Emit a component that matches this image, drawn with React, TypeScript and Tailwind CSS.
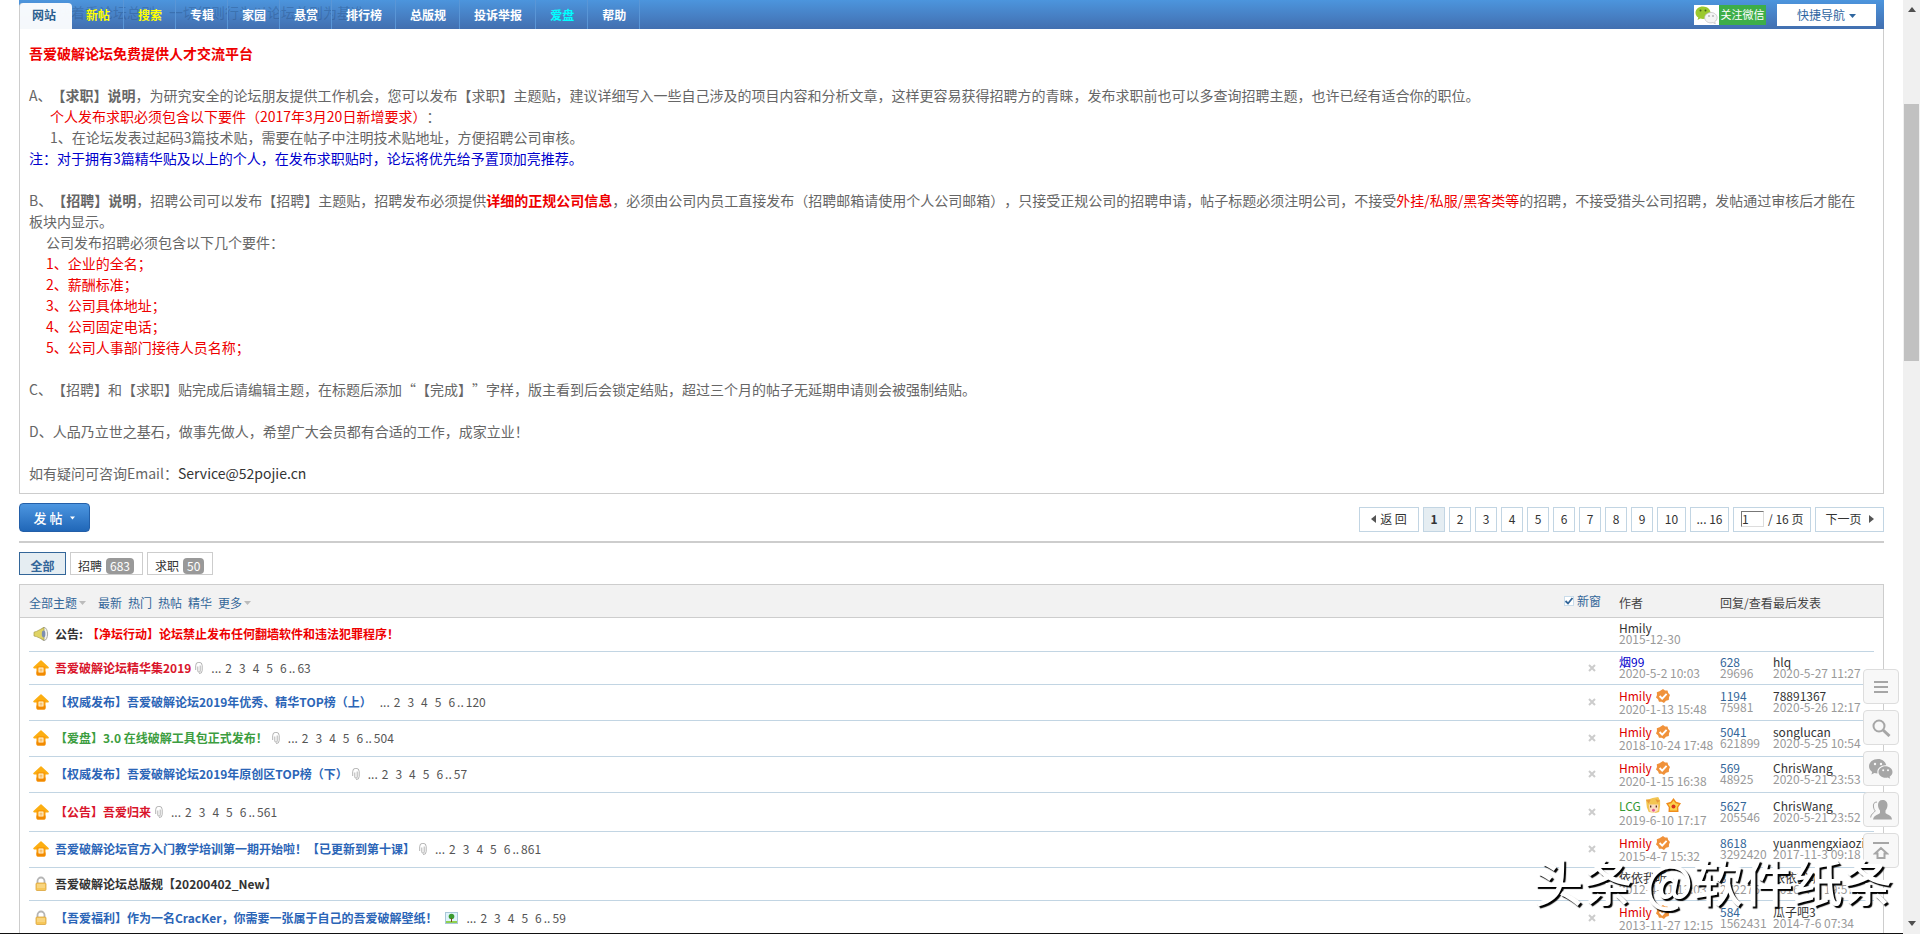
import type { ReactNode } from 'react';

interface NavItem {
  label: string;
  color: string;
}

interface Thread {
  icon: 'notice' | 'pin' | 'lock';
  title: string;
  prefix?: string;
  color: string;
  attach?: 'clip' | 'image';
  lastPage?: string;
  closable: boolean;
  author: string;
  authorColor: string;
  badge?: 'verified' | 'lcg';
  date: string;
  replies?: string;
  views?: string;
  lastUser?: string;
  lastDate?: string;
  height: string;
}

const navItems: NavItem[] = [
  { label: '新帖', color: 'text-[#ffff00]' },
  { label: '搜索', color: 'text-[#ffff00]' },
  { label: '专辑', color: 'text-white' },
  { label: '家园', color: 'text-white' },
  { label: '悬赏', color: 'text-white' },
  { label: '排行榜', color: 'text-white' },
  { label: '总版规', color: 'text-white' },
  { label: '投诉举报', color: 'text-white' },
  { label: '爱盘', color: 'text-[#00ffff]' },
  { label: '帮助', color: 'text-white' },
];

const threads: Thread[] = [
  { icon: 'notice', prefix: '公告:', title: '【净坛行动】论坛禁止发布任何翻墙软件和违法犯罪程序！', color: 'text-[#ee0000]', closable: false, author: 'Hmily', authorColor: 'text-[#333]', date: '2015-12-30', height: 'h-[33px]' },
  { icon: 'pin', title: '吾爱破解论坛精华集2019', color: 'text-[#d9152b]', attach: 'clip', lastPage: '63', closable: true, author: '烟99', authorColor: 'text-[#0000cc]', date: '2020-5-2 10:03', replies: '628', views: '29696', lastUser: 'hlq', lastDate: '2020-5-27 11:27', height: 'h-[33px]' },
  { icon: 'pin', title: '【权威发布】吾爱破解论坛2019年优秀、精华TOP榜（上）', color: 'text-[#2b65b7]', lastPage: '120', closable: true, author: 'Hmily', authorColor: 'text-[#dd0000]', badge: 'verified', date: '2020-1-13 15:48', replies: '1194', views: '75981', lastUser: '78891367', lastDate: '2020-5-26 12:17', height: 'h-9' },
  { icon: 'pin', title: '【爱盘】3.0 在线破解工具包正式发布！', color: 'text-[#3c9d40]', attach: 'clip', lastPage: '504', closable: true, author: 'Hmily', authorColor: 'text-[#dd0000]', badge: 'verified', date: '2018-10-24 17:48', replies: '5041', views: '621899', lastUser: 'songlucan', lastDate: '2020-5-25 10:54', height: 'h-9' },
  { icon: 'pin', title: '【权威发布】吾爱破解论坛2019年原创区TOP榜（下）', color: 'text-[#2b65b7]', attach: 'clip', lastPage: '57', closable: true, author: 'Hmily', authorColor: 'text-[#dd0000]', badge: 'verified', date: '2020-1-15 16:38', replies: '569', views: '48925', lastUser: 'ChrisWang', lastDate: '2020-5-21 23:53', height: 'h-9' },
  { icon: 'pin', title: '【公告】吾爱归来', color: 'text-[#d9152b]', attach: 'clip', lastPage: '561', closable: true, author: 'LCG', authorColor: 'text-[#339933]', badge: 'lcg', date: '2019-6-10 17:17', replies: '5627', views: '205546', lastUser: 'ChrisWang', lastDate: '2020-5-21 23:52', height: 'h-[39px]' },
  { icon: 'pin', title: '吾爱破解论坛官方入门教学培训第一期开始啦！【已更新到第十课】', color: 'text-[#2b65b7]', attach: 'clip', lastPage: '861', closable: true, author: 'Hmily', authorColor: 'text-[#dd0000]', badge: 'verified', date: '2015-4-7 15:32', replies: '8618', views: '3292420', lastUser: 'yuanmengxiaozi', lastDate: '2017-11-3 09:18', height: 'h-9' },
  { icon: 'lock', title: '吾爱破解论坛总版规【20200402_New】', color: 'text-[#333]', closable: false, author: '依依我听', authorColor: 'text-[#333]', date: '2012-4-11 13:03', replies: '3', views: '272276', lastUser: '依依我听', lastDate: '2016-4-1 19:57', height: 'h-[33px]' },
  { icon: 'lock', title: '【吾爱福利】作为一名CracKer，你需要一张属于自己的吾爱破解壁纸！', color: 'text-[#2b65b7]', attach: 'image', lastPage: '59', closable: true, author: 'Hmily', authorColor: 'text-[#dd0000]', badge: 'verified', date: '2013-11-27 12:15', replies: '584', views: '1562431', lastUser: '瓜子吧3', lastDate: '2014-7-6 07:34', height: 'h-9' },
];

function ThreadIcon({ type }: { type: Thread['icon'] }) {
  if (type === 'notice') {
    return (
      <svg width="16" height="16" viewBox="0 0 16 16">
        <ellipse cx="11" cy="8" rx="3.6" ry="6.6" fill="#f1f1ee" stroke="#a9aaa4" />
        <path d="M1 6.2 3.5 5.4 11 1.5V14L3.5 10.6 1 10Z" fill="#e0d465" stroke="#a79c48" strokeWidth=".7" />
        <ellipse cx="10.6" cy="8" rx="1.8" ry="3.4" fill="#7d8fb0" />
      </svg>
    );
  }
  if (type === 'pin') {
    return (
      <svg width="16" height="16" viewBox="0 0 16 16">
        <path d="M8 1 15 7.600H1Z" fill="#fcae12" stroke="#fcae12" strokeWidth="1.600" strokeLinejoin="round" />
        <rect x="3.500" y="6" width="9" height="9.500" rx="1.500" fill="#f99c0b" />
        <path d="M3.500 11.500h9V14a1.500 1.500 0 0 1-1.500 1.500H5A1.500 1.500 0 0 1 3.500 14Z" fill="#f28a00" />
        <rect x="5.500" y="7.500" width="5" height="5" rx=".5" fill="#fff3d6" />
        <path d="M6.500 9.200h3M6.500 10.900h3" stroke="#f0a030" strokeWidth=".9" />
      </svg>
    );
  }
  return (
    <svg width="16" height="16" viewBox="0 0 16 16">
      <path d="M4.500 8V5a3.500 3.500 0 0 1 7 0v3" fill="none" stroke="#b5b5b5" strokeWidth="1.800" />
      <rect x="3" y="7" width="10" height="7.500" rx="1" fill="#f6c75a" stroke="#dba53c" strokeWidth=".8" />
      <path d="M4 9h8M4 11h8" stroke="#fbe3a4" />
    </svg>
  );
}

function ClipIcon() {
  return (
    <svg className="ml-1" width="8" height="12" viewBox="0 0 8 12" fill="none" stroke="#aaa">
      <path d="M2.800 4.500V9a1.200 1.200 0 0 0 2.400 0V3.500M.7 8V3.500a3 3 0 0 1 6.500 0v5a3 3 0 0 1-3.200 3" strokeWidth=".9" />
    </svg>
  );
}

function ImageIcon() {
  return (
    <svg className="ml-2" width="13" height="12" viewBox="0 0 13 12">
      <rect x=".5" y=".5" width="12" height="11" fill="#dff3fb" stroke="#a9c7d8" />
      <path d="M1 9h11v2H1z" fill="#8fd14f" />
      <circle cx="6.500" cy="4.500" r="2.800" fill="#3a9b2f" />
      <path d="M6 6h1v4H6z" fill="#7a4b1d" />
    </svg>
  );
}

function VerifiedBadge() {
  return (
    <svg width="14" height="14" viewBox="0 0 14 14">
      <path d="M7 0 9 1.500 11.500 1.500 12.200 4 14 6 13 8.200 12.800 11 10 11.800 8 14 5.800 12.800 3 12.800 2 10.300 0 8.500 1 6 .8 3.300 3.500 2.200Z" fill="#f0923a" />
      <path d="M3.600 7 6.200 9.600 10.600 4.800" fill="none" stroke="#fff" strokeWidth="1.900" />
    </svg>
  );
}

function LcgBadges() {
  return (
    <span className="flex items-center gap-1">
      <svg width="17" height="17" viewBox="0 0 18 18">
        <path d="M1 3 5 2 8 1 14 0 16 4 16 9 15 16 11 17 4 16 2 11Z" fill="#f3c552" />
        <path d="M4 8h10v6l-4 3-5-2Z" fill="#fbdcc0" />
        <path d="M1 3h5l-2 4ZM11 2l5 2-3 2Z" fill="#e79a3b" />
        <path d="M6 9v2M12 9v2" stroke="#5a3423" strokeWidth="1.400" />
        <circle cx="9" cy="14" r="1.500" fill="#e2568f" />
      </svg>
      <svg width="15" height="15" viewBox="0 0 15 15">
        <path d="M7.500 0 10.200 3.800 15 5.200 12.300 9.200 12.500 14h-10L2.700 9.200 0 5.200 4.800 3.800Z" fill="#f08c1c" />
        <path d="M7.500 2.500 9.500 5.300 12.800 6.200 10.900 9 11 12.500H4L4.100 9 2.200 6.200 5.500 5.300Z" fill="#fbd34d" />
        <circle cx="7.500" cy="8.500" r="2" fill="#d8321b" />
      </svg>
    </span>
  );
}

function WechatLogo() {
  return (
    <svg width="25" height="20" viewBox="0 0 25 20" className="bg-white">
      <path d="M9 1.500c-4.200 0-7.500 2.700-7.500 6.200 0 2 1.100 3.700 2.800 4.900l-.8 2.400 2.800-1.400c.9.200 1.700.3 2.700.3 4.200 0 7.500-2.800 7.500-6.200S13.200 1.500 9 1.500Z" fill="#9bc92e" />
      <path d="M17 7.500c-3.600 0-6.300 2.300-6.300 5.200s2.700 5.200 6.300 5.200c.7 0 1.400-.1 2-.3l2.300 1.100-.6-1.900c1.500-1 2.400-2.400 2.400-4.100 0-2.900-2.700-5.200-6.100-5.200Z" fill="#f4f4f4" stroke="#bbb" strokeWidth=".7" />
      <circle cx="6.500" cy="5.500" r="1" fill="#44641a" />
      <circle cx="11.500" cy="5.500" r="1" fill="#44641a" />
      <circle cx="15" cy="11" r=".8" fill="#888" />
      <circle cx="19" cy="11" r=".8" fill="#888" />
    </svg>
  );
}

function Arrow({ className }: { className: string }) {
  return <svg width="7" height="4" viewBox="0 0 7 4" className={`inline-block fill-current ${className}`}><path d="M0 0h7L3.500 4Z" /></svg>;
}

function NavBar() {
  return (
    <header className="relative flex h-[29px] items-center justify-between bg-gradient-to-b from-[#4c95dd] to-[#426fb0] pr-2">
      {/* rules line scrolled underneath the sticky bar */}
      <p className="pointer-events-none absolute left-[10px] top-0.5 text-sm leading-5 text-[#1d3f6e]/30">本版块着重论坛总则，一切细则行为以论坛总则为基准</p>
      <nav className="relative flex h-full items-end text-xs font-bold leading-[29px]">
        <a href="#" className="h-[26px] w-[53px] rounded-t border-l border-[#cdcdcd] bg-white/95 pl-3 leading-[23px] text-[#2b5f8f]">网站</a>
        {navItems.map((item) => (
          <a key={item.label} href="#" className={`border-r border-[#5a96d6] pl-[14px] pr-[13px] ${item.color}`}>{item.label}</a>
        ))}
      </nav>
      <div className="flex items-center gap-[11px]">
        <a href="#" className="flex h-5 items-center bg-[#3dae49] text-white">
          <WechatLogo />
          <span className="w-[47px] text-center text-[11px]">关注微信</span>
        </a>
        <button className="flex h-[22px] w-[99px] items-center justify-center gap-1 bg-white text-xs text-[#2f669f]">
          快捷导航 <Arrow className="mt-0.5" />
        </button>
      </div>
    </header>
  );
}

function Rules() {
  return (
    <section className="border-x border-b border-[#cdcdcd] pb-[9px] pl-[9px] pr-4 pt-[14px] text-sm leading-[21px] text-[#666]">
      <p className="font-bold text-[#ee0000]">吾爱破解论坛免费提供人才交流平台</p>
      <br />
      <p>A、<b>【求职】说明</b>，为研究安全的论坛朋友提供工作机会，您可以发布【求职】主题贴，建议详细写入一些自己涉及的项目内容和分析文章，这样更容易获得招聘方的青睐，发布求职前也可以多查询招聘主题，也许已经有适合你的职位。</p>
      <p className="pl-[21px]"><span className="text-[#ee0000]">个人发布求职必须包含以下要件（2017年3月20日新增要求）</span>：</p>
      <p className="pl-[21px]">1、在论坛发表过起码3篇技术贴，需要在帖子中注明技术贴地址，方便招聘公司审核。</p>
      <p className="text-[#0000cc]">注：对于拥有3篇精华贴及以上的个人，在发布求职贴时，论坛将优先给予置顶加亮推荐。</p>
      <br />
      <p>B、<b>【招聘】说明</b>，招聘公司可以发布【招聘】主题贴，招聘发布必须提供<b className="text-[#ee0000]">详细的正规公司信息</b>，必须由公司内员工直接发布（招聘邮箱请使用个人公司邮箱），只接受正规公司的招聘申请，帖子标题必须注明公司，不接受<span className="text-[#ee0000]">外挂/私服/黑客类等</span>的招聘，不接受猎头公司招聘，发帖通过审核后才能在板块内显示。</p>
      <p className="pl-[17px]">公司发布招聘必须包含以下几个要件：</p>
      <div className="pl-[17px] text-[#ee0000]">
        <p>1、企业的全名；</p>
        <p>2、薪酬标准；</p>
        <p>3、公司具体地址；</p>
        <p>4、公司固定电话；</p>
        <p>5、公司人事部门接待人员名称；</p>
      </div>
      <br />
      <p>C、【招聘】和【求职】贴完成后请编辑主题，在标题后添加“【完成】”字样，版主看到后会锁定结贴，超过三个月的帖子无延期申请则会被强制结贴。</p>
      <br />
      <p>D、人品乃立世之基石，做事先做人，希望广大会员都有合适的工作，成家立业！</p>
      <br />
      <p>如有疑问可咨询Email：<a href="#" className="text-[#333]">Service@52pojie.cn</a></p>
    </section>
  );
}

function PageLink({ children, className = 'w-[22px]' }: { children: ReactNode; className?: string }) {
  return <a href="#" className={`flex h-[25px] items-center justify-center border border-[#c2d5e3] pb-0.5 text-[#333] ${className}`}>{children}</a>;
}

function Pagination() {
  return (
    <div className="flex gap-1 text-xs">
      <PageLink className="w-[60px] gap-1">
        <svg width="5" height="8" viewBox="0 0 5 8" fill="#555"><path d="M5 0v8L0 4Z" /></svg>返 回
      </PageLink>
      <PageLink className="w-[22px] bg-[#e5edf2] font-bold">1</PageLink>
      {['2', '3', '4', '5', '6', '7', '8', '9'].map((n) => (
        <PageLink key={n}>{n}</PageLink>
      ))}
      <PageLink className="w-[29px]">10</PageLink>
      <PageLink className="w-[39px]">... 16</PageLink>
      <label className="flex h-[25px] w-[78px] items-center gap-1 border border-[#c2d5e3] pb-0.5 pl-[7px] text-[#333]">
        <input defaultValue="1" aria-label="页码" className="h-4 w-[23px] border border-b-[#ddd] border-l-[#777] border-r-[#ddd] border-t-[#777] leading-[14px]" />
        <span>/ 16 页</span>
      </label>
      <PageLink className="w-[69px] gap-[7px]">
        下一页<svg width="5" height="8" viewBox="0 0 5 8" fill="#555"><path d="M0 0v8L5 4Z" /></svg>
      </PageLink>
    </div>
  );
}

function CategoryTab({ label, count }: { label: string; count: string }) {
  return (
    <a href="#" className="flex h-[23px] items-center gap-1 border border-[#cdcdcd] pl-[7px] pr-2 pt-1 text-[#333]">
      {label}
      <span className="h-4 rounded-sm bg-[#999] px-1 leading-4 text-white">{count}</span>
    </a>
  );
}

function ListHeader() {
  return (
    <div className="flex h-[33px] items-center border-b border-[#cdcdcd] bg-[#f2f2f2] pl-[9px] pt-1 text-[#336699]">
      <a href="#" className="flex w-[69px] items-center gap-0.5">全部主题<Arrow className="text-[#bbb]" /></a>
      <div className="flex flex-1 gap-1.5">
        <a href="#">最新</a>
        <a href="#">热门</a>
        <a href="#">热帖</a>
        <a href="#">精华</a>
        <a href="#" className="flex items-center gap-0.5">更多<Arrow className="text-[#bbb]" /></a>
      </div>
      <label className="flex w-[55px] items-center gap-[3px] pb-1">
        <span className="relative flex">
          <input type="checkbox" defaultChecked className="size-[10px] appearance-none border border-[#c9dcea] bg-white" />
          <svg className="pointer-events-none absolute inset-0" width="10" height="10" viewBox="0 0 10 10" fill="none" stroke="#336699" strokeWidth="1.800"><path d="M1.500 5 4 7.500 8.500 2" /></svg>
        </span>
        新窗
      </label>
      <span className="w-[101px] text-[#444]">作者</span>
      <span className="w-[53px] whitespace-nowrap text-[#444]">回复/查看</span>
      <span className="w-[110px] text-[#444]">最后发表</span>
    </div>
  );
}

function ThreadPages({ lastPage }: { lastPage: string }) {
  return (
    <span className="ml-2 flex">
      ...
      <span className="ml-1 flex gap-[7px]">
        <a href="#">2</a>
        <a href="#">3</a>
        <a href="#">4</a>
        <a href="#">5</a>
        <a href="#">6</a>
      </span>
      <span className="mx-0.5">..</span>
      <a href="#">{lastPage}</a>
    </span>
  );
}

function ThreadRow({ thread }: { thread: Thread }) {
  return (
    <tr className={`border-b border-[#c2d5e3] ${thread.height}`}>
      <td className="pl-1"><ThreadIcon type={thread.icon} /></td>
      <td className="whitespace-nowrap text-[#555]">
        <div className="flex items-center">
          {thread.prefix && <b className="mr-1 text-[#333]">{thread.prefix}</b>}
          <a href="#" className={`font-bold ${thread.color}`}>{thread.title}</a>
          {thread.attach === 'clip' && <ClipIcon />}
          {thread.attach === 'image' && <ImageIcon />}
          {thread.lastPage && <ThreadPages lastPage={thread.lastPage} />}
        </div>
      </td>
      <td>
        {thread.closable && (
          <button aria-label="隐藏置顶帖" className="block">
            <svg width="8" height="8" viewBox="0 0 8 8" stroke="#ccc" strokeWidth="2"><path d="M1 1l6 6M7 1L1 7" /></svg>
          </button>
        )}
      </td>
      <td className="whitespace-nowrap pb-0.5 leading-[11px]">
        <div className="flex items-center gap-1">
          <a href="#" className={thread.authorColor}>{thread.author}</a>
          {thread.badge === 'verified' && <VerifiedBadge />}
          {thread.badge === 'lcg' && <LcgBadges />}
        </div>
        <div className="text-[#999]">{thread.date}</div>
      </td>
      <td className="pb-0.5 leading-[11px]">
        <a href="#" className="block text-[#336699]">{thread.replies}</a>
        <span className="block text-[#999]">{thread.views}</span>
      </td>
      <td className="whitespace-nowrap pb-0.5 leading-[11px]">
        <a href="#" className="block text-[#333]">{thread.lastUser}</a>
        <span className="block text-[#999]">{thread.lastDate}</span>
      </td>
    </tr>
  );
}

function ThreadList() {
  return (
    <section className="mt-[9px] border border-b-0 border-[#cdcdcd] text-xs">
      <ListHeader />
      <div className="px-[9px]">
        <table className="w-full table-fixed border-collapse">
          <colgroup>
            <col className="w-[26px]" />
            <col />
            <col className="w-[31px]" />
            <col className="w-[101px]" />
            <col className="w-[53px]" />
            <col className="w-[101px]" />
          </colgroup>
          <tbody>
            {threads.map((thread) => (
              <ThreadRow key={thread.title} thread={thread} />
            ))}
          </tbody>
        </table>
      </div>
    </section>
  );
}

function SideButton({ label, children }: { label: string; children: ReactNode }) {
  return (
    <button aria-label={label} className="flex h-[35px] w-9 items-center justify-center rounded-sm border border-[#ddd] bg-[#f8f8f8] text-[#a6a6a6]">
      {children}
    </button>
  );
}

function SideTools() {
  return (
    <aside className="fixed bottom-[66px] right-[21px] flex flex-col gap-1.5">
      <SideButton label="菜单">
        <svg width="14" height="12" viewBox="0 0 14 12" fill="currentColor"><path d="M0 0h14v2H0zM0 5h14v2H0zM0 10h14v2H0z" /></svg>
      </SideButton>
      <SideButton label="搜索">
        <svg width="19" height="18" viewBox="0 0 19 18" fill="none" stroke="currentColor"><circle cx="7" cy="7" r="5.500" strokeWidth="2" /><path d="m11 11 6.500 6" strokeWidth="3" /></svg>
      </SideButton>
      <SideButton label="微信">
        <svg width="24" height="20" viewBox="0 0 24 20">
          <path d="M9 0C4 0 0 3.200 0 7.300c0 2.300 1.300 4.300 3.200 5.600L2.400 15.400l3-1.500c1 .3 2 .5 3.100.5A6.200 6.200 0 0 1 8.300 13c0-3.700 3.600-6.700 8-6.700h1C16.500 2.600 13.100 0 9 0Z" fill="currentColor" />
          <path d="M23.500 13c0-3.200-3.200-5.700-7-5.700s-7 2.500-7 5.700 3.200 5.800 7 5.800c.8 0 1.600-.1 2.300-.3l2.400 1.200-.6-2c1.700-1.100 2.900-2.800 2.900-4.700Z" fill="currentColor" />
          <g fill="#f8f8f8"><circle cx="6" cy="5" r="1.200" /><circle cx="12" cy="5" r="1.200" /><circle cx="14.200" cy="11.300" r="1" /><circle cx="19" cy="11.300" r="1" /></g>
        </svg>
      </SideButton>
      <SideButton label="用户">
        <svg width="22" height="20" viewBox="0 0 22 20">
          <path d="M12.500 0c-3 0-4.500 2-4.500 5 0 2.500 1 4.200 2 5.500v2.500c-1 1.500-6 1.500-7 6.500h19c-.5-5-5.500-5-6.500-6.500v-2.500c1-1.300 2-3 2-5.500 0-3-2-5-5-5Z" fill="currentColor" />
          <path d="M7 2C4 2 3 4 3.500 7c.3 2 1 3 1.500 3.500C5 13 1 13 .7 17.500" fill="none" stroke="currentColor" />
        </svg>
      </SideButton>
      <SideButton label="返回顶部">
        <svg width="16" height="18" viewBox="0 0 16 18" fill="none" stroke="currentColor" strokeWidth="2"><path d="M0 1h16M8 6 2 11.500h2.500V16h7v-4.500H14Z" /></svg>
      </SideButton>
    </aside>
  );
}

function ScrollBar() {
  return (
    <div aria-hidden className="fixed inset-y-0 right-0 flex w-[17px] flex-col items-center bg-[#f0f0f0] text-[#505050]">
      <svg width="8" height="5" viewBox="0 0 8 5" className="mt-[7px] fill-current"><path d="M0 5h8L4 0Z" /></svg>
      <div className="mt-[92px] h-[257px] w-[15px] bg-[#c1c1c1]" />
      <svg width="8" height="5" viewBox="0 0 8 5" className="mb-2 mt-auto fill-current"><path d="M0 0h8L4 5Z" /></svg>
    </div>
  );
}

export default function App() {
  return (
    <div className="h-screen overflow-hidden border-b border-[#111] bg-white pl-[19px] pr-9 font-['Noto_Sans_CJK_SC',sans-serif] [text-spacing-trim:space-all]">
      <NavBar />
      <main>
        <Rules />
        <div className="mt-[9px] flex items-end justify-between border-b-2 border-[#cdcdcd] pb-[9px]">
          <button className="flex h-[29px] w-[71px] items-center justify-center gap-2 rounded-sm border border-[#235fa8] bg-gradient-to-b from-[#4c96e0] to-[#2067b8] text-[13px] font-medium text-white">
            发 帖 <Arrow className="w-[5px]" />
          </button>
          <Pagination />
        </div>
        <div className="mt-[9px] flex gap-1 text-xs">
          <a href="#" className="flex h-[23px] w-[47px] items-center justify-center border border-[#336699] bg-[#e5edf2] pt-1 font-bold text-[#336699]">全部</a>
          <CategoryTab label="招聘" count="683" />
          <CategoryTab label="求职" count="50" />
        </div>
        <ThreadList />
      </main>
      <SideTools />
      <ScrollBar />
      <div className="pointer-events-none fixed bottom-[18px] right-[27px] whitespace-nowrap text-[50px] font-medium leading-[72px] text-white [text-shadow:2px_2px_1px_#000]">头条 @软件纸条</div>
    </div>
  );
}
